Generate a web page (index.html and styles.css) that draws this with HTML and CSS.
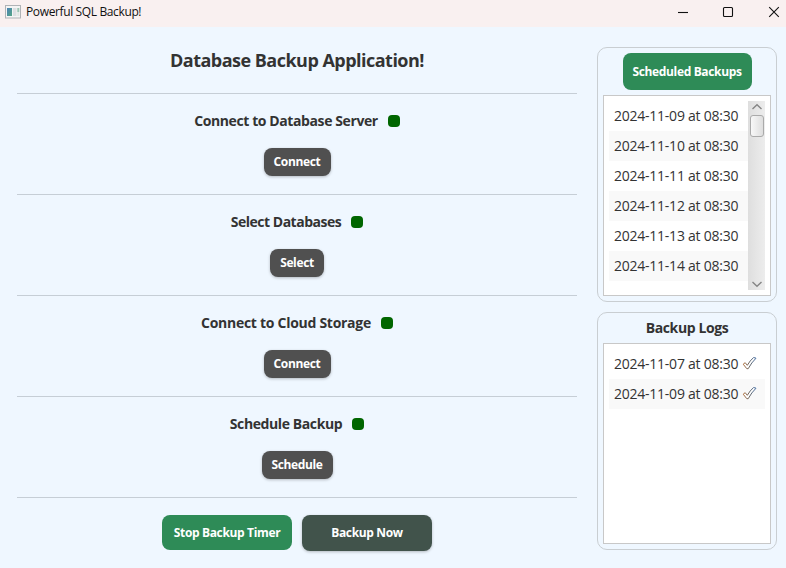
FILE: index.html
```html
<!DOCTYPE html>
<html lang="en">
<head>
<meta charset="utf-8">
<title>Powerful SQL Backup!</title>
<link rel="stylesheet" href="styles.css">
</head>
<body>
<header class="titlebar">
  <svg class="app-icon" width="16" height="14" viewBox="0 0 16 14">
    <defs>
      <linearGradient id="g" x1="0" y1="0" x2="1" y2="1"><stop offset="0" stop-color="#4b83b5"/><stop offset="1" stop-color="#55a585"/></linearGradient>
      <linearGradient id="tick" x1="0" y1="0" x2="1" y2="0"><stop offset="0" stop-color="#b0703c"/><stop offset=".5" stop-color="#666"/><stop offset="1" stop-color="#456fa5"/></linearGradient>
    </defs>
    <rect x=".5" y=".5" width="15" height="12.5" fill="#f4f4f4" stroke="#b0b3b6"/>
    <rect x="2" y="3" width="5" height="8" fill="url(#g)"/>
    <rect x="8" y="3" width="3.5" height="8" fill="#dcdfe2"/>
    <rect x="12.3" y="3" width="2" height="4" fill="#9cc5b4"/>
    <rect x="12.3" y="7" width="2" height="4" fill="#dfe5e2"/>
  </svg>
  <span class="app-name">Powerful SQL Backup!</span>
  <svg class="controls" width="104" height="12" viewBox="0 0 104 12" fill="none" stroke="#111" stroke-width="1.1">
    <path d="M1 6.5h10"/>
    <rect x="46.500" y="1.500" width="9" height="9" rx="1"/>
    <path d="M92.200 1.200l9.600 9.600M101.800 1.200l-9.600 9.600"/>
  </svg>
</header>
<main class="content">
  <div class="main-column">
    <h1 class="title"><span>Database Backup Application!</span></h1>
    <section class="step">
      <div class="step-head"><h2 class="server">Connect to Database Server</h2><i class="status"></i></div>
      <button class="btn connect">Connect</button>
    </section>
    <section class="step">
      <div class="step-head"><h2 class="databases">Select Databases</h2><i class="status"></i></div>
      <button class="btn select">Select</button>
    </section>
    <section class="step">
      <div class="step-head"><h2 class="cloud">Connect to Cloud Storage</h2><i class="status"></i></div>
      <button class="btn connect">Connect</button>
    </section>
    <section class="step">
      <div class="step-head"><h2 class="schedule-head">Schedule Backup</h2><i class="status"></i></div>
      <button class="btn schedule">Schedule</button>
    </section>
    <footer class="actions">
      <button class="btn action green">Stop Backup Timer</button>
      <button class="btn action dark">Backup Now</button>
    </footer>
  </div>
  <aside class="side">
    <section class="panel scheduled">
      <button class="btn green panel-btn">Scheduled Backups</button>
      <div class="list">
        <ul class="rows">
          <li>2024-11-09 at 08:30</li>
          <li>2024-11-10 at 08:30</li>
          <li>2024-11-11 at 08:30</li>
          <li>2024-11-12 at 08:30</li>
          <li>2024-11-13 at 08:30</li>
          <li>2024-11-14 at 08:30</li>
        </ul>
        <div class="scrollbar">
          <svg width="17" height="14" viewBox="0 0 17 14" fill="none" stroke="#858585" stroke-width="1.4"><path d="M4.500 8L9 3.800 13.500 8"/></svg>
          <div class="thumb"></div>
          <svg class="down" width="17" height="14" viewBox="0 0 17 14" fill="none" stroke="#858585" stroke-width="1.4"><path d="M4.500 6L9 10.200 13.500 6"/></svg>
        </div>
      </div>
    </section>
    <section class="panel logs">
      <h3 class="panel-title">Backup Logs</h3>
      <div class="list">
        <ul class="rows">
          <li>2024-11-07 at 08:30<svg class="check" width="15" height="14" viewBox="0 0 15 14"><path d="M1.200 8.200L3.200 6.700 5.300 9.300Q8 4.500 11.600 1.500L14 2.200Q9.500 6.500 6.200 12.700H4.800Z"/></svg></li>
          <li>2024-11-09 at 08:30<svg class="check" width="15" height="14" viewBox="0 0 15 14"><path d="M1.200 8.200L3.200 6.700 5.300 9.300Q8 4.500 11.600 1.500L14 2.200Q9.500 6.500 6.200 12.700H4.800Z"/></svg></li>
        </ul>
      </div>
    </section>
  </aside>
</main>
</body>
</html>
```
FILE: styles.css
```css
* { box-sizing: border-box; }
body {
  margin: 0;
  width: 786px;
  height: 568px;
  overflow: hidden;
  display: flex;
  flex-direction: column;
  background: #eff7ff;
  color: #333;
  font-family: "Open Sans", "Noto Sans", sans-serif;
  white-space: nowrap;
}
h1, h2, h3, ul { margin: 0; padding: 0; }
.titlebar {
  height: 27px;
  flex: none;
  display: flex;
  align-items: center;
  padding: 0 5px 4px;
  background: #f9f0f0;
  color: #111;
}
.app-name { margin-left: 5px; font-size: 12px; letter-spacing: -0.37px; }
.controls { margin-left: auto; }
.content { flex: 1; display: flex; padding: 20px 9px 18px 17px; gap: 20px; }
.main-column { width: 560px; display: flex; flex-direction: column; }
.title {
  height: 47px;
  display: flex;
  justify-content: center;
  font-size: 18px;
  line-height: 27px;
  font-weight: 700;
  letter-spacing: -0.52px;
  border-bottom: 1px solid #c6ced6;
}
.step {
  height: 101px;
  display: flex;
  flex-direction: column;
  align-items: center;
  padding-top: 17px;
  border-bottom: 1px solid #c6ced6;
}
.step-head { height: 20px; display: flex; align-items: center; gap: 10px; margin-bottom: 17px; }
.step-head h2, .panel-title { font-size: 14px; line-height: 20px; font-weight: 700; letter-spacing: -0.4px; }
.step-head .databases { letter-spacing: -0.5px; }
.step-head .cloud { letter-spacing: -0.28px; }
.status { width: 12px; height: 12px; border-radius: 4px; background: #060; }
.btn {
  height: 28px;
  padding: 0;
  border: 0;
  border-radius: 8px;
  background: #505050;
  color: #fff;
  font: 700 12px/26px "Open Sans", "Noto Sans", sans-serif;
  letter-spacing: -0.35px;
  box-shadow: 0 1px 3px rgba(0, 0, 0, .25);
}
.connect { width: 67px; }
.select { width: 54px; }
.schedule { width: 71px; }
.actions { display: flex; justify-content: center; gap: 10px; padding-top: 17px; }
.action { width: 130px; height: 35px; }
.green { background: #2e8b57; box-shadow: none; }
.dark { height: 36px; background: #41534b; }
.side { width: 180px; display: flex; flex-direction: column; gap: 10px; }
.panel {
  display: flex;
  flex-direction: column;
  align-items: center;
  padding: 5px;
  border: 1px solid #c9ced2;
  border-radius: 10px;
}
.scheduled { height: 255px; }
.logs { height: 238px; }
.panel-btn { width: 129px; height: 37px; flex: none; margin-bottom: 5px; }
.panel-title { height: 25px; flex: none; }
.list {
  align-self: stretch;
  flex: 1;
  display: flex;
  padding: 5px;
  background: #fff;
  border: 1px solid #c8c8c8;
}
.rows { flex: 1; list-style: none; }
.rows li {
  height: 30px;
  display: flex;
  align-items: center;
  padding: 0 0 2px 5px;
  font-size: 14px;
  letter-spacing: -0.24px;
}
.rows li:nth-child(even) { background: #f9f9f9; }
.scrollbar {
  width: 17px;
  height: 189px;
  display: flex;
  flex-direction: column;
  background: linear-gradient(90deg, #dedede, #ededed);
}
.thumb {
  width: 14px;
  height: 22px;
  margin-left: 2px;
  border: 1px solid #aaa;
  border-radius: 3px;
  background: linear-gradient(90deg, #f8f8f8, #dedede);
}
.down { margin-top: auto; }
.check { margin-left: 4px; fill: #fff; stroke: url(#tick); stroke-width: 1; }
```
